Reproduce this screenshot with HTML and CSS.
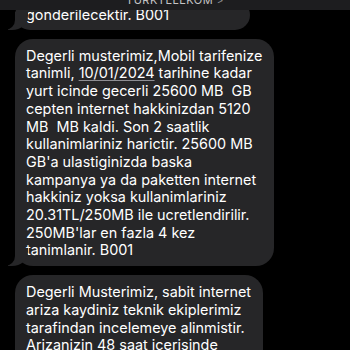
FILE: index.html
```html
<!DOCTYPE html>
<html lang="tr">
<head>
  <meta charset="UTF-8" />
  <meta name="viewport" content="width=device-width, initial-scale=1.0" />
  <title>TÜRKTELEKOM</title>
  <link rel="stylesheet" href="styles.css">
</head>
<body>

  <header class="topbar">
    <div class="sender">TÜRKTELEKOM <span class="chev">&gt;</span></div>
  </header>

  <div class="thread">
    <div class="bubble first">gonderilecektir. B001</div>

    <div class="bubble">Degerli musterimiz,Mobil tarifenize<br>
      tanimli, <span class="link">10/01/2024</span> tarihine kadar<br>
      yurt icinde gecerli 25600 MB &nbsp;GB<br>
      cepten internet hakkinizdan 5120<br>
      MB &nbsp;MB kaldi. Son 2 saatlik<br>
      kullanimlariniz harictir. 25600 MB<br>
      GB'a ulastiginizda baska<br>
      kampanya ya da paketten internet<br>
      hakkiniz yoksa kullanimlariniz<br>
      20.31TL/250MB ile ucretlendirilir.<br>
      250MB'lar en fazla 4 kez<br>
      tanimlanir. B001</div>

    <div class="bubble last">Degerli Musterimiz, sabit internet<br>
      ariza kaydiniz teknik ekiplerimiz<br>
      tarafindan incelemeye alinmistir.<br>
      Arizanizin 48 saat icerisinde<br>
      giderilmesi beklenmektedir. B001</div>
  </div>

</body>
</html>
```

FILE: styles.css
```css
* {
  margin: 0; padding: 0;
  box-sizing: border-box;
}

body {
  background: #000;
  color: #fff;
  font-family: 'Inter', 'Noto Sans', sans-serif;
  width: 350px;
  height: 350px;
  overflow: hidden;
  position: relative;
}

/* ust bar, mesajlarin uzerinde durur */
.topbar {
  position: absolute;
  top: 0; left: 0;
  width: 100%;
  height: 10px;
  background: #1d1d1f;
  overflow: hidden;
  z-index: 5;
  display: flex;
  justify-content: center;
}

.sender {
  font-size: 11px;
  letter-spacing: 0.5px;
  color: #c4c4c6;
  line-height: 12px;
  margin-top: -6px;
}

.sender .chev {
  color: #8e8e93;
  font-size: 10px;
}

.thread {
  display: flex;
  flex-direction: column;
  align-items: flex-start;
  gap: 9px;
  padding-left: 15px;
}

.bubble {
  position: relative;
  background: #262628;
  border-radius: 18px;
  padding: 8px 12px 7px 11px;
  font-size: 14.4px;
  line-height: 17.7px;
  white-space: nowrap;
}

.bubble.first {
  width: 235px;
  padding-top: 6px;
  padding-bottom: 6px;
}

/* kuyruk */
.bubble::before {
  content: "";
  position: absolute;
  left: -7px;
  bottom: 0;
  width: 20px;
  height: 18px;
  background: #262628;
  border-bottom-right-radius: 16px 14px;
}

.bubble::after {
  content: "";
  position: absolute;
  left: -10px;
  bottom: 0;
  width: 10px;
  height: 20px;
  background: #000;
  border-bottom-right-radius: 10px;
}

.link {
  text-decoration: underline;
  text-decoration-color: #8e8e93;
  text-underline-offset: 2px;
}
```
